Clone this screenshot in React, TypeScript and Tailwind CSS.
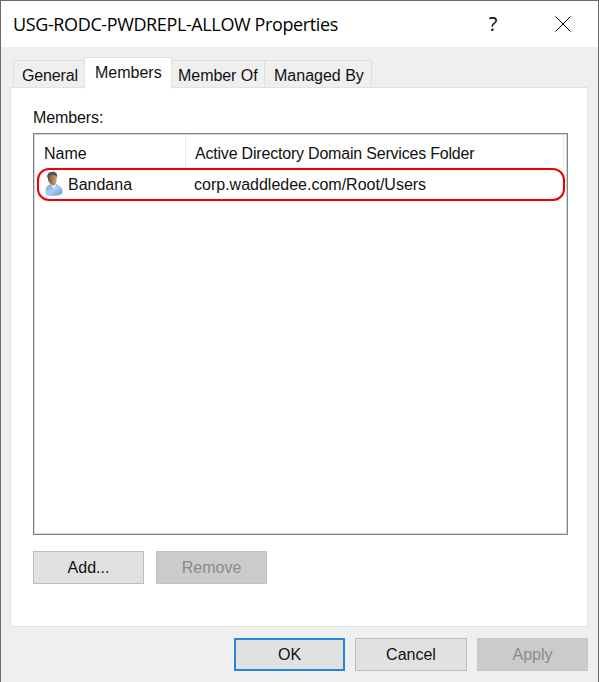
import type { ReactNode } from "react";

type TabProps = { label: string; className: string; text: string };

function Tab({ label, className, text }: TabProps) {
  return (
    <button className={`flex shrink-0 whitespace-nowrap border-[#e0e0e0] ${className}`}>
      <span className={text}>{label}</span>
    </button>
  );
}

type ButtonProps = { children: ReactNode; className: string; disabled?: boolean };

function DialogButton({ children, className, disabled }: ButtonProps) {
  return (
    <button
      disabled={disabled}
      className={`flex h-[33px] shrink-0 items-center justify-center ${className}`}
    >
      {children}
    </button>
  );
}

function UserIcon() {
  return (
    <svg width="20" height="26" viewBox="0 0 20 26" className="-mt-0.5 shrink-0">
      <defs>
        <linearGradient id="shirt" x1="0" y1="0" x2="1" y2="1">
          <stop offset="0" stopColor="#7ba5cd" />
          <stop offset="0.5" stopColor="#a9cff1" />
          <stop offset="1" stopColor="#6195c8" />
        </linearGradient>
        <linearGradient id="face" x1="0" y1="0" x2="1" y2="0">
          <stop offset="0" stopColor="#5c4635" />
          <stop offset="0.5" stopColor="#a9794f" />
          <stop offset="1" stopColor="#cfa274" />
        </linearGradient>
      </defs>
      <path d="M2 23.5C1 19 1.5 15.5 5.5 13.5L12 13C15.5 14.2 18.5 16.5 18.5 20.5C18.5 23 16 24.5 10.5 24.8C6 25 3 25 2 23.5Z" fill="url(#shirt)" />
      <path d="M6.5 12.5L12 12L12 15.5L9.5 18Z" fill="#e6eef5" />
      <path d="M3.5 5C3.5 1.5 12 1.5 12.6 5.5C13.1 9.5 12 14.3 9.8 14.5C6.5 14.5 3.5 10 3.5 5Z" fill="url(#face)" />
      <path d="M3.4 6.5C3 3.5 4.4 1 8.5 .8C12 .6 14 3 12.8 7C12.5 4.8 11 4 9.5 4C7 4 5 4.5 3.4 6.5Z" fill="#55524f" />
    </svg>
  );
}

export default function App() {
  return (
    <div className="flex h-[682px] w-[599px] flex-col overflow-hidden border-x border-t border-[#6c6b6c] bg-[#efefef] font-['Liberation_Sans',Arial,sans-serif] text-[16px] leading-5 text-[#111]">
      <header className="flex h-[46px] shrink-0 items-center bg-white pl-3">
        <h1 className="w-[467px] whitespace-nowrap font-['Open_Sans','Noto_Sans',sans-serif] text-[18px] tracking-[-0.38px] text-black">
          USG-RODC-PWDREPL-ALLOW Properties
        </h1>
        <button className="w-[26px] text-center font-['Open_Sans',sans-serif] text-[20px] text-black">?</button>
        <button className="ml-[49px]">
          <svg width="16" height="16" viewBox="0 0 16 16" className="block" stroke="#000" strokeWidth="1">
            <path d="M.5 .5L15.5 15.5M15.5 .5L.5 15.5" />
          </svg>
        </button>
      </header>

      <nav className="z-10 mt-[10px] -mb-0.5 flex h-[32px] shrink-0 items-end pl-3">
        <Tab label="General" className="mb-0.5 h-[27px] w-[71px] border-t border-l pt-[5px] pl-2" text="tracking-[-0.15px]" />
        <Tab label="Members" className="h-[32px] w-[88px] border-x border-t bg-white pt-[5px] pl-[10px]" text="" />
        <Tab label="Member Of" className="mb-0.5 h-[27px] w-[93px] border-t border-r pt-[5px] pl-1.5" text="tracking-[-0.05px]" />
        <Tab label="Managed By" className="mb-0.5 h-[27px] w-[107px] border-t border-r pt-[5px] pl-[9px]" text="" />
      </nav>

      <main className="ml-[9px] flex h-[540px] w-[578px] shrink-0 flex-col border border-[#e2e2e2] bg-white pl-[22px]">
        <label className="mt-[20px] h-5 tracking-[-0.1px]">Members:</label>
        <section className="mt-[5px] h-[402px] w-[535px] shrink-0 border border-[#7d838d] bg-white px-[3px] shadow-[inset_0_0_0_1px_#d4d6da]">
          <div className="flex h-[34px] pt-px">
            <div className="w-[149px] border-r border-[#ececec] pt-[9px] pl-[7px]">Name</div>
            <div className="grow border-r border-[#ececec] pt-[9px] pl-[9px] tracking-[-0.2px] whitespace-nowrap">
              Active Directory Domain Services Folder
            </div>
          </div>
          <div className="flex h-[33px] w-[528px] items-center rounded-[12px] border-2 border-[#f00000] pl-[5px]">
            <UserIcon />
            <span className="ml-1 w-[126px] pt-px">Bandana</span>
            <span className="pt-px">corp.waddledee.com/Root/Users</span>
          </div>
        </section>
        <div className="mt-[16px] flex gap-3">
          <DialogButton className="w-[111px] border border-[#bebebe] bg-[#e1e1e1]">Add...</DialogButton>
          <DialogButton disabled className="w-[111px] border border-[#c3c3c3] bg-[#cbcbcb] text-[#8a8a8a]">Remove</DialogButton>
        </div>
      </main>

      <footer className="mt-[11px] flex justify-end gap-[10px] pr-[10px]">
        <DialogButton className="w-[111px] border-2 border-[#2386da] bg-[#e1e1e1]">OK</DialogButton>
        <DialogButton className="w-[112px] border border-[#bebebe] bg-[#e1e1e1]">Cancel</DialogButton>
        <DialogButton disabled className="w-[111px] border border-[#c6c6c6] bg-[#cbcbcb] text-[#8a8a8a]">Apply</DialogButton>
      </footer>
    </div>
  );
}
